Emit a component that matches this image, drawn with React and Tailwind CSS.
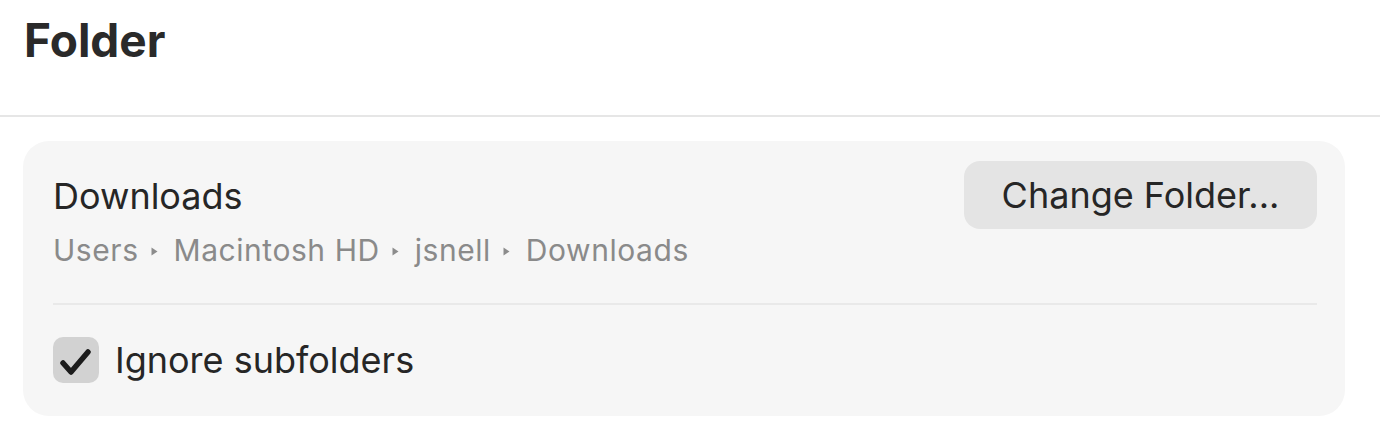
import React from 'react';

const Sep = () => (
  <svg width="7" height="9" viewBox="0 0 7 9" className="ml-[12px] mr-[16px] mt-[2px]">
    <path d="M0.5 0.5 L6.5 4.5 L0.5 8.5 Z" fill="#8c8c8c" />
  </svg>
);

const App = () => {
  const path = ['Users', 'Macintosh HD', 'jsnell', 'Downloads'];

  return (
    <div className="w-[1380px] h-[428px] bg-white font-['Inter',sans-serif] text-[#262626] overflow-hidden">
      {/* Title */}
      <div className="h-[115px] pl-[24px] pt-[17px]">
        <h1 className="text-[46px] leading-none font-bold text-[#2a2a2a]">Folder</h1>
      </div>
      <div className="h-[2px] bg-[#e6e6e6]" />

      {/* Card */}
      <div className="pl-[23px] pt-[24px]">
        <div className="w-[1322px] bg-[#f6f6f6] rounded-[26px] pl-[30px] pr-[28px] pt-[20px] pb-[33px]">
          <div className="flex justify-between items-start">
            <div className="pt-[17px]">
              <p className="text-[36px] leading-none">Downloads</p>
              <div className="flex items-center mt-[21px] text-[30px] leading-none tracking-[0.55px] text-[#8a8a8a]">
                {path.map((p, i) => (
                  <React.Fragment key={i}>
                    {i > 0 && <Sep />}
                    <span>{p}</span>
                  </React.Fragment>
                ))}
              </div>
            </div>
            <button className="w-[353px] h-[68px] rounded-[16px] bg-[#e4e4e4] text-[36px] leading-none text-[#262626]">
              Change Folder...
            </button>
          </div>

          <div className="h-[2px] bg-[#e9e9e9] mt-[38px]" />

          <div className="flex items-center gap-[16px] mt-[32px]">
            <div className="w-[46px] h-[46px] rounded-[10px] bg-[#d2d2d2] flex items-center justify-center">
              <svg width="46" height="46" viewBox="0 0 46 46">
                <path d="M10 26 L18 35 L35 15" fill="none" stroke="#1c1c1c" strokeWidth="5.5" strokeLinecap="round" strokeLinejoin="round" />
              </svg>
            </div>
            <span className="text-[36px] leading-none">Ignore subfolders</span>
          </div>
        </div>
      </div>
    </div>
  );
};

export default App;
